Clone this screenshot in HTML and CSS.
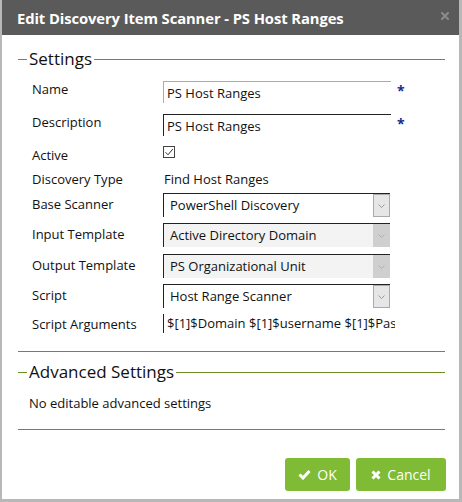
FILE: index.html
```html
<!DOCTYPE html>
<html>
<head>
<meta charset="utf-8">
<link rel="stylesheet" href="styles.css">
</head>
<body>
<div class="modal">
  <div class="titlebar">
    <span class="title">Edit Discovery Item Scanner - PS Host Ranges</span>
    <svg class="close" width="8" height="8" viewBox="0 0 8 8"><path d="M1 1L7 7M7 1L1 7" stroke="#8a8a8a" stroke-width="2.2" stroke-linecap="square"/></svg>
  </div>
  <div class="content">
    <div class="section">
      <div class="legend"><span>Settings</span></div>
      <div class="rows">
        <div class="row r-name">
          <div class="label">Name</div>
          <div class="value"><div class="input focus">PS Host Ranges</div><span class="req">*</span></div>
        </div>
        <div class="row r-desc">
          <div class="label">Description</div>
          <div class="value"><div class="input">PS Host Ranges</div><span class="req">*</span></div>
        </div>
        <div class="row r-active">
          <div class="label">Active</div>
          <div class="value"><span class="check"><svg width="10" height="10" viewBox="0 0 10 10"><path d="M1.5 5.2L4 7.8L8.8 2" fill="none" stroke="#333" stroke-width="1"/></svg></span></div>
        </div>
        <div class="row r-type">
          <div class="label">Discovery Type</div>
          <div class="value plain">Find Host Ranges</div>
        </div>
        <div class="row r-sel">
          <div class="label">Base Scanner</div>
          <div class="value"><div class="select"><span class="sel-text">PowerShell Discovery</span><span class="btn"><svg width="7" height="4" viewBox="0 0 7 4"><path d="M0.5 0.5L3.5 3.5L6.5 0.5" fill="none" stroke="#999" stroke-width="1"/></svg></span></div></div>
        </div>
        <div class="row r-sel">
          <div class="label">Input Template</div>
          <div class="value"><div class="select disabled"><span class="sel-text">Active Directory Domain</span><span class="btn"><svg width="7" height="4" viewBox="0 0 7 4"><path d="M0.5 0.5L3.5 3.5L6.5 0.5" fill="none" stroke="#b0b0b0" stroke-width="1"/></svg></span></div></div>
        </div>
        <div class="row r-sel r-out">
          <div class="label">Output Template</div>
          <div class="value"><div class="select disabled"><span class="sel-text">PS Organizational Unit</span><span class="btn"><svg width="7" height="4" viewBox="0 0 7 4"><path d="M0.5 0.5L3.5 3.5L6.5 0.5" fill="none" stroke="#b0b0b0" stroke-width="1"/></svg></span></div></div>
        </div>
        <div class="row r-sel">
          <div class="label">Script</div>
          <div class="value"><div class="select"><span class="sel-text">Host Range Scanner</span><span class="btn"><svg width="7" height="4" viewBox="0 0 7 4"><path d="M0.5 0.5L3.5 3.5L6.5 0.5" fill="none" stroke="#999" stroke-width="1"/></svg></span></div></div>
        </div>
        <div class="row r-args">
          <div class="label">Script Arguments</div>
          <div class="value"><div class="input args">$[1]$Domain $[1]$username $[1]$Password</div></div>
        </div>
      </div>
    </div>
    <div class="section adv">
      <div class="legend"><span>Advanced Settings</span></div>
      <div class="note">No editable advanced settings</div>
    </div>
    <div class="actions">
      <button class="button ok"><svg width="13" height="11" viewBox="0 0 13 11"><path d="M1.5 5.5L5 9L11.5 2" fill="none" stroke="#fff" stroke-width="3"/></svg>OK</button>
      <button class="button cancel"><svg width="10" height="10" viewBox="0 0 10 10"><path d="M1.5 1.5L8.5 8.5M8.5 1.5L1.5 8.5" fill="none" stroke="#fff" stroke-width="3"/></svg>Cancel</button>
    </div>
  </div>
</div>
</body>
</html>
```

FILE: styles.css
```css
html, body {
  margin: 0;
  padding: 0;
}
body {
  background: #b8b8b8;
  font-family: "Open Sans", "Liberation Sans", sans-serif;
  color: #111;
  width: 462px;
  height: 502px;
  overflow: hidden;
}
.modal {
  margin-left: 2px;
  width: 457px;
  height: 499px;
  background: #fff;
  display: flex;
  flex-direction: column;
}
.titlebar {
  height: 35px;
  background: #5a5a5a;
  display: flex;
  align-items: center;
  justify-content: space-between;
  padding: 0 10px 0 15px;
  flex: none;
}
.title {
  color: #fff;
  font-weight: 700;
  font-size: 14.8px;
  letter-spacing: -0.1px;
}
.close {
  margin-top: -4px;
}
.content {
  padding: 14px 13px 0 16px;
  display: flex;
  flex-direction: column;
}
.section {
  border-bottom: 1px solid #6e8d22;
  margin-right: 1px;
}
.legend {
  display: flex;
  align-items: center;
  height: 20px;
  font-size: 17px;
  line-height: 20px;
  color: #111;
}
.legend::before {
  content: "";
  width: 9px;
  height: 1px;
  background: #6e8d22;
  margin-right: 2px;
}
.legend::after {
  content: "";
  flex: 1;
  height: 1px;
  background: #6e8d22;
  margin-left: 2px;
}
.rows {
  padding: 12px 0 18px 14px;
  display: flex;
  flex-direction: column;
}
.row {
  display: flex;
  align-items: center;
  font-size: 13px;
}
.label {
  width: 131px;
  flex: none;
}
.value {
  display: flex;
  align-items: center;
}
.input {
  width: 228px;
  height: 22px;
  box-sizing: border-box;
  border-top: 1px solid #222;
  border-left: 1px solid #222;
  padding: 2px 0 0 3px;
  line-height: 18px;
  font-size: 13px;
  white-space: nowrap;
  overflow: hidden;
}
.input.focus {
  border-color: #66c2e8;
}
.req {
  color: #1a2a8a;
  font-weight: 700;
  font-size: 14px;
  margin-left: 6px;
  margin-top: -4px;
}
.r-name { height: 22px; }
.r-name .label { margin-top: -6px; }
.r-desc { height: 22px; margin-top: 11px; }
.r-desc .label { margin-top: -6px; }
.r-active { height: 22px; margin-top: 6px; }
.r-active .label { margin-top: 4px; }
.check {
  width: 12px;
  height: 12px;
  border: 1px solid #444;
  box-sizing: border-box;
  display: flex;
  align-items: center;
  justify-content: center;
  margin-top: -2px;
}
.r-type { height: 22px; margin-top: 4px; }
.plain { padding-left: 1px; }
.r-sel { height: 24px; margin-top: 6px; }
.r-sel .label { margin-top: -3px; }
.r-type + .r-sel { margin-top: 3px; }
.r-sel.r-out { margin-top: 7px; }
.select {
  width: 227px;
  height: 24px;
  box-sizing: border-box;
  border-top: 1px solid #222;
  border-left: 1px solid #222;
  display: flex;
  align-items: stretch;
  background: #fff;
}
.select.disabled {
  background: #f3f3f3;
}
.sel-text {
  flex: 1;
  padding-left: 6px;
  line-height: 22px;
  font-size: 13px;
  color: #111;
}
.btn {
  width: 17px;
  box-sizing: border-box;
  background: #e6e6e6;
  border: 1px solid #a9a9a9;
  display: flex;
  align-items: center;
  justify-content: center;
}
.select.disabled .btn {
  background: #cfcfcf;
  border-color: #cfcfcf;
}
.r-args { height: 19px; margin-top: 6px; }
.input.args {
  height: 19px;
  width: 232px;
  border-top: none;
  padding: 0 0 0 3px;
  line-height: 19px;
  font-size: 13px;
}
.adv {
  margin-top: 10px;
}
.note {
  font-size: 13px;
  line-height: 20px;
  padding: 11px 0 16px 11px;
}
.actions {
  display: flex;
  justify-content: flex-end;
  gap: 6px;
  margin-top: 28px;
}
.button {
  height: 33px;
  border: none;
  border-radius: 3px;
  background: #7fbb35;
  color: #fff;
  font-family: "Open Sans", "Liberation Sans", sans-serif;
  font-size: 14px;
  display: flex;
  align-items: center;
  justify-content: center;
  gap: 6px;
  padding: 0;
}
.ok { width: 65px; }
.cancel { width: 90px; }
```
